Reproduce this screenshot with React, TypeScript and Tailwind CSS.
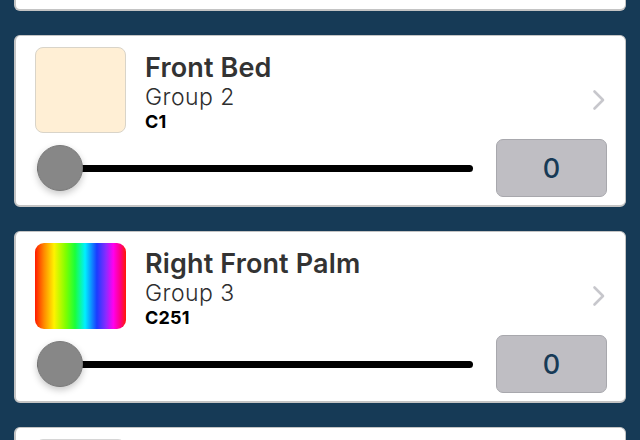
import React from "react";

type Zone = {
  name: string;
  group: string;
  code: string;
  swatch: "plain" | "rainbow";
  color?: string;
  value: number;
};

const zones: Zone[] = [
  { name: "Front Bed", group: "Group 2", code: "C1", swatch: "plain", color: "#ffefd5", value: 0 },
  { name: "Right Front Palm", group: "Group 3", code: "C251", swatch: "rainbow", value: 0 },
];

function Chevron() {
  return (
    <svg width="14" height="22" viewBox="0 0 14 22" fill="none" aria-hidden>
      <path d="M2.5 2.5 L11 11 L2.5 19.5" stroke="#c7c7cc" strokeWidth="2.6" strokeLinecap="round" strokeLinejoin="round" />
    </svg>
  );
}

function Swatch({ z }: { z: Zone }) {
  if (z.swatch === "rainbow") {
    return (
      <div className="h-[86px] w-[91px] shrink-0 rounded-[9px] bg-[linear-gradient(90deg,#ff1a00_0%,#ff8a00_10%,#fff200_21%,#7dff00_34%,#1aff3a_44%,#00f0ff_55%,#1a3cff_68%,#8a2bff_78%,#ff00f0_86%,#ff0080_94%,#ff1a00_100%)]" />
    );
  }
  return (
    <div
      className="h-[86px] w-[91px] shrink-0 rounded-[8px] border border-[#d9d4c9]"
      style={{ backgroundColor: z.color }}
    />
  );
}

function ZoneCard({ z }: { z: Zone }) {
  return (
    <div className="flex h-[172px] shrink-0 flex-col rounded-[6px] border border-l-2 border-b-2 border-[#c4c4c4] bg-white pl-[19px] pr-[18px] pt-[11px]">
      <div className="flex items-start">
        <Swatch z={z} />
        <div className="ml-[19px] flex flex-col pt-[5px]">
          <div className="text-[27px] font-semibold leading-[31px] tracking-[0.005em] text-[#333333]">{z.name}</div>
          <div className="mt-[2px] text-[23px] font-light leading-[24px] tracking-[0.02em] text-[#2e2e2e]">{z.group}</div>
          <div className="mt-[2px] text-[18px] font-bold leading-[21px] tracking-[0.01em] text-black">{z.code}</div>
        </div>
        <div className="ml-auto mr-[1px] mt-[42px]">
          <Chevron />
        </div>
      </div>
      <div className="mt-[6px] flex h-[58px] items-center">
        <div className="relative ml-[2px] flex h-[46px] flex-1 items-center">
          <div className="h-[7px] w-full rounded-full bg-black" />
          <div className="absolute left-0 top-0 h-[46px] w-[46px] rounded-full border border-[#7a7a7a] bg-[#878787] shadow-[0_3px_7px_rgba(0,0,0,0.22)]" />
        </div>
        <div className="ml-[23px] flex h-[58px] w-[111px] items-center justify-center rounded-[7px] border border-[#a8a8ad] bg-[#bfbec3] text-[27px] font-medium leading-none text-[#173a56]">
          {z.value}
        </div>
      </div>
    </div>
  );
}

export default function App() {
  return (
    <div
      className="h-[440px] w-[640px] overflow-hidden bg-[#163a56]"
      style={{ fontFamily: "Inter, 'Noto Sans', 'Liberation Sans', sans-serif" }}
    >
      <div className="flex flex-col gap-[24px] px-[14px]">
        {/* bottom edge of the card scrolled above */}
        <div className="h-[11px] rounded-b-[6px] border-b-2 border-l-2 border-r border-[#c4c4c4] bg-white" />
        {zones.map((z) => (
          <ZoneCard key={z.name} z={z} />
        ))}
        {/* top edge of the next card */}
        <div className="h-[30px] rounded-t-[6px] border border-l-2 border-[#c4c4c4] bg-white pl-[19px] pt-[11px]">
          <div className="h-[20px] w-[91px] rounded-t-[8px] border border-[#d6d6d6] bg-white" />
        </div>
      </div>
    </div>
  );
}
